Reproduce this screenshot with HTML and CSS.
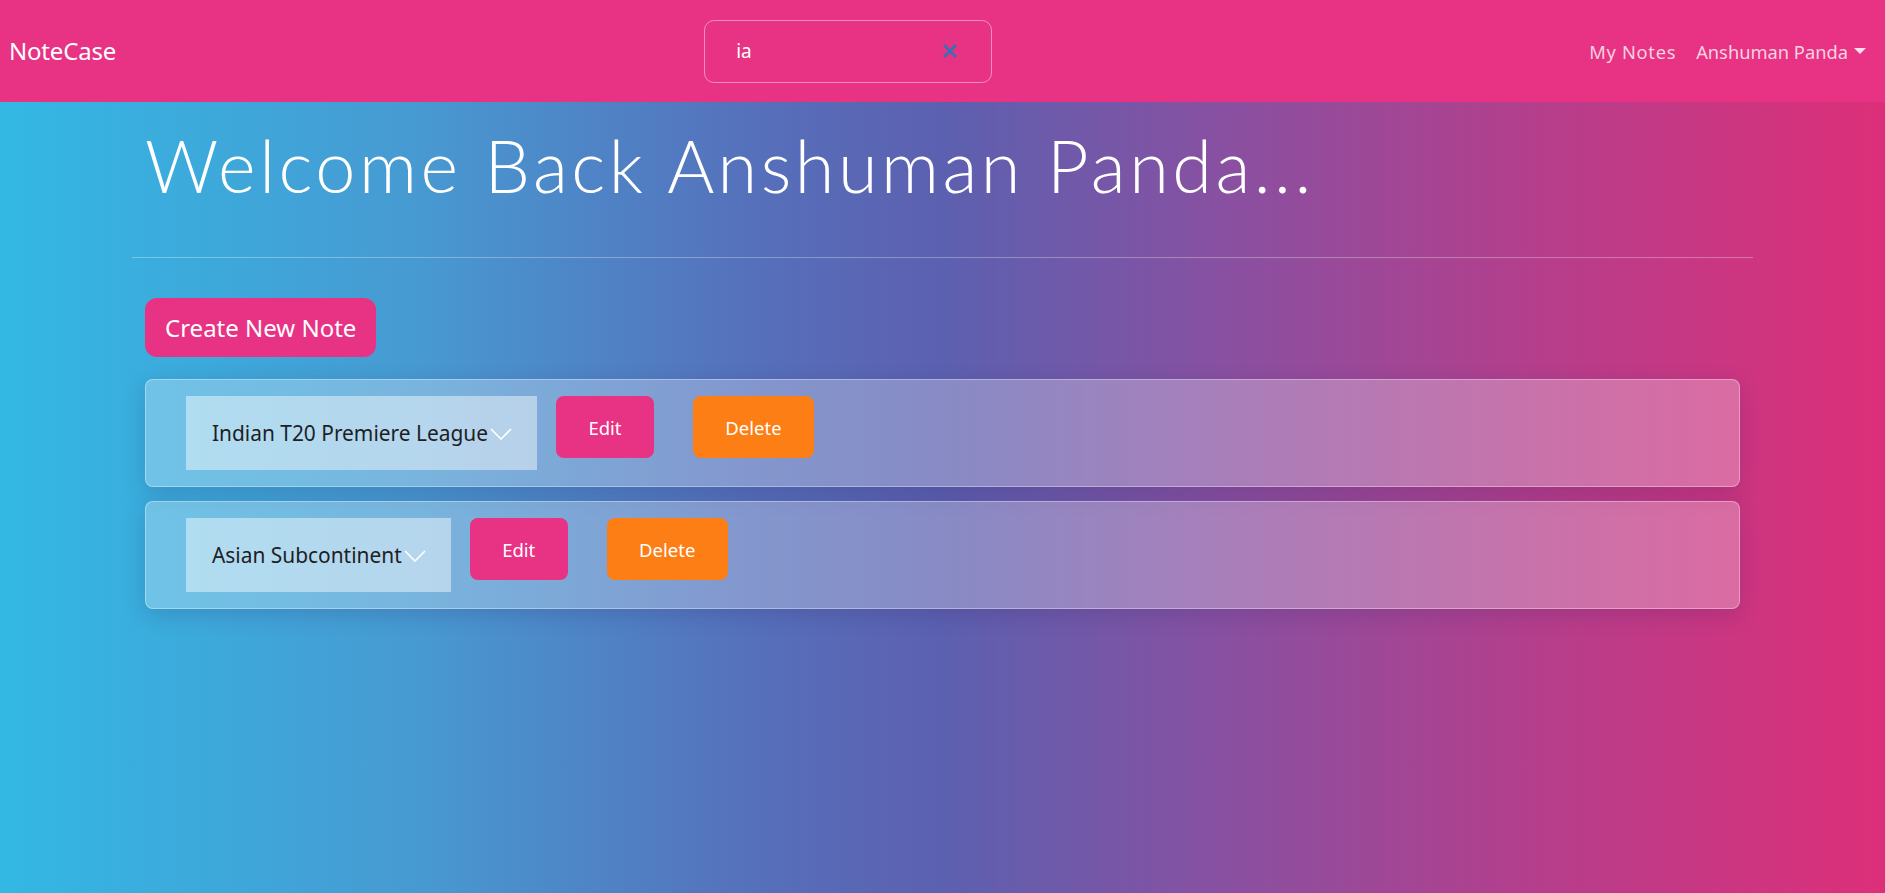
FILE: index.html
```html
<!DOCTYPE html>
<html lang="en">
<head>
<meta charset="utf-8">
<title>NoteCase</title>
<link rel="stylesheet" href="styles.css">
</head>
<body>
<nav class="navbar">
  <a class="brand" href="#">NoteCase</a>
  <div class="search-wrap">
    <form class="search">
      <span class="search-text">ia</span>
      <svg class="search-clear" width="14" height="14" viewBox="0 0 14 14"><path d="M2 2 L12 12 M12 2 L2 12" stroke="#3f6db0" stroke-width="3" stroke-linecap="square"/></svg>
    </form>
  </div>
  <ul class="nav-links">
    <li><a href="#" class="nav-notes">My Notes</a></li>
    <li><a href="#" class="dropdown">Anshuman Panda<span class="caret"></span></a></li>
  </ul>
</nav>
<main class="page">
  <h1 class="title">Welcome Back Anshuman Panda...</h1>
  <hr class="divider">
  <div class="content">
    <button class="btn btn-create">Create New Note</button>
    <div class="card">
      <div class="select">Indian T20 Premiere League<svg class="chev" width="22" height="12" viewBox="0 0 22 12"><path d="M1 1 L11 11 L21 1" fill="none" stroke="#fff" stroke-width="1.6"/></svg></div>
      <button class="btn btn-edit">Edit</button>
      <button class="btn btn-delete">Delete</button>
    </div>
    <div class="card">
      <div class="select">Asian Subcontinent<svg class="chev" width="22" height="12" viewBox="0 0 22 12"><path d="M1 1 L11 11 L21 1" fill="none" stroke="#fff" stroke-width="1.6"/></svg></div>
      <button class="btn btn-edit">Edit</button>
      <button class="btn btn-delete">Delete</button>
    </div>
  </div>
</main>
</body>
</html>
```

FILE: styles.css
```css
* { box-sizing: border-box; }
html, body { margin: 0; padding: 0; }
body {
  min-height: 100vh;
  font-family: "Noto Sans", "Open Sans", sans-serif;
  background: linear-gradient(to right, #33b8e4 0%, #479ad2 22%, #5670bb 40%, #5c60b0 50%, #8950a1 65%, #b63e8b 82%, #dd2f79 100%);
  color: #fff;
}
.navbar {
  height: 102px;
  background: #e83283;
  display: flex;
  align-items: center;
  padding: 0 19px 0 9px;
}
.brand {
  color: #fff;
  text-decoration: none;
  font-size: 24px;
  line-height: 1;
  letter-spacing: -0.2px;
}
.search-wrap {
  flex: 1;
  display: flex;
  justify-content: center;
  padding-right: 9px;
}
.search {
  width: 288px;
  height: 63px;
  border: 1px solid rgba(255,255,255,0.45);
  border-radius: 10px;
  display: flex;
  align-items: center;
  padding: 0 34px 0 31px;
}
.search-text {
  flex: 1;
  font-size: 19px;
  color: #fff;
}
.search-clear { display: block; }
.nav-links {
  list-style: none;
  margin: 0;
  padding: 0;
  display: flex;
  gap: 20px;
}
.nav-links a {
  color: rgba(255,255,255,0.78);
  text-decoration: none;
  font-size: 18.3px;
  display: flex;
  align-items: center;
}
.nav-notes { letter-spacing: 0.7px; }
.caret {
  display: inline-block;
  margin-left: 6px;
  border-left: 6px solid transparent;
  border-right: 6px solid transparent;
  border-top: 6px solid rgba(255,255,255,0.85);
}
.page {
  padding: 0 132px;
}
.title {
  margin: 20px 0 0 13px;
  font-family: "Lato", sans-serif;
  font-weight: 300;
  font-size: 72px;
  line-height: 86px;
  letter-spacing: 3.5px;
}
.divider {
  margin: 49px 0 0;
  border: 0;
  border-top: 1px solid rgba(255,255,255,0.3);
}
.content {
  padding: 40px 13px 0;
  display: flex;
  flex-direction: column;
  align-items: flex-start;
}
.btn {
  border: 0;
  color: #fff;
  font-family: "Noto Sans", "Open Sans", sans-serif;
  cursor: pointer;
}
.btn-create {
  background: #e83283;
  height: 59px;
  padding: 0 20px;
  border-radius: 12px;
  font-size: 24px;
  margin-bottom: 22px;
}
.card {
  align-self: stretch;
  display: flex;
  align-items: flex-start;
  padding: 16px 40px;
  margin-bottom: 14px;
  background: rgba(255,255,255,0.27);
  border: 1px solid rgba(255,255,255,0.35);
  border-radius: 8px;
  box-shadow: 0 6px 22px rgba(40,20,90,0.18);
}
.select {
  height: 74px;
  display: flex;
  align-items: center;
  padding: 0 25px 0 26px;
  background: rgba(255,255,255,0.45);
  color: #1d2125;
  font-size: 20.9px;
  margin-right: 19px;
}
.chev { display: block; margin-left: 2px; margin-top: 2px; }
.btn-edit {
  background: #e83283;
  height: 62px;
  width: 98px;
  border-radius: 8px;
  font-size: 18.5px;
  margin-right: 39px;
}
.btn-delete {
  background: #fd7e14;
  height: 62px;
  width: 121px;
  border-radius: 8px;
  font-size: 18.5px;
}
```
